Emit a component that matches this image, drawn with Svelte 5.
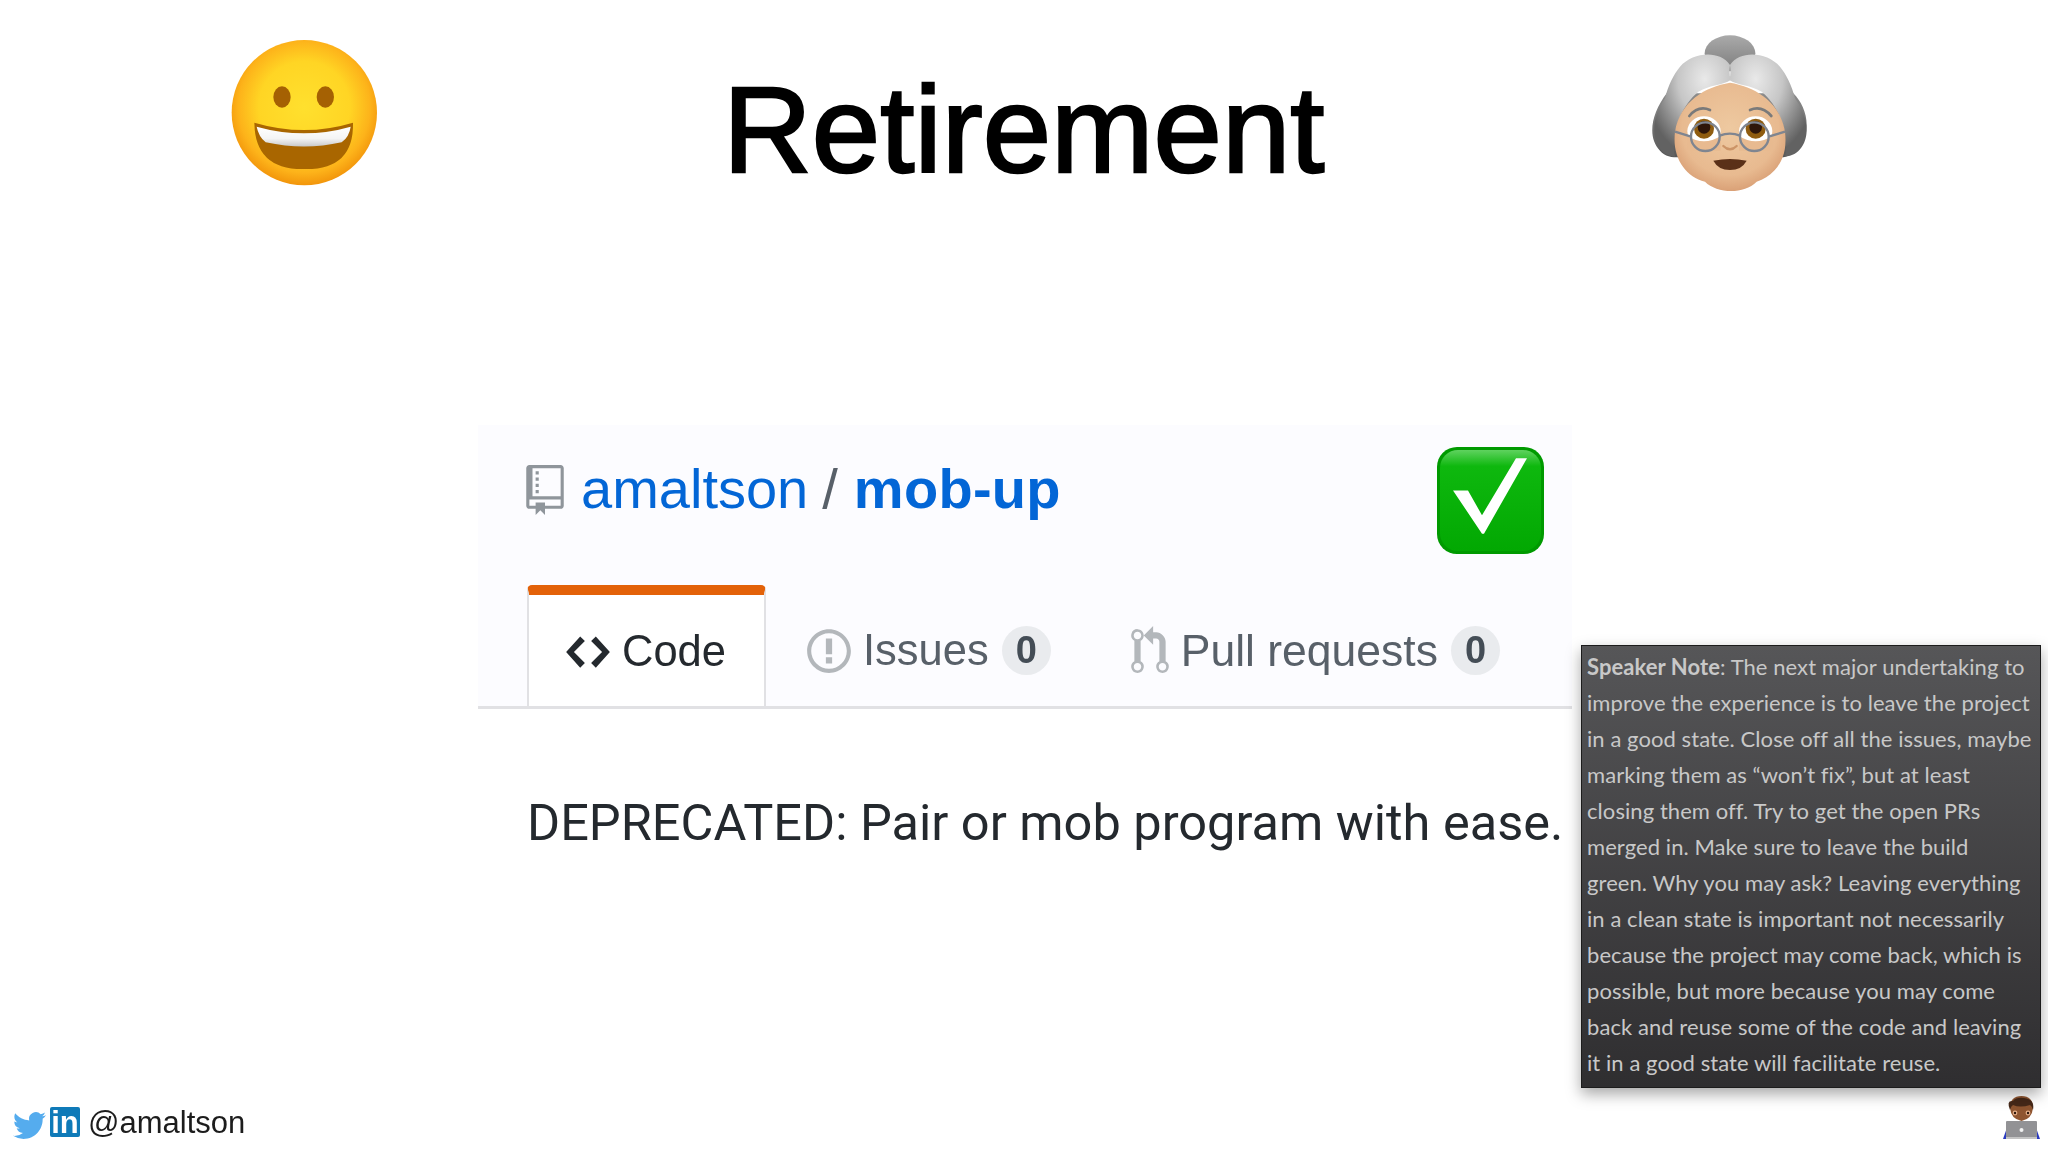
<script>
  const noteLines = [
    "improve the experience is to leave the project",
    "in a good state. Close off all the issues, maybe",
    "marking them as “won’t fix”, but at least",
    "closing them off. Try to get the open PRs",
    "merged in. Make sure to leave the build",
    "green. Why you may ask? Leaving everything",
    "in a clean state is important not necessarily",
    "because the project may come back, which is",
    "possible, but more because you may come",
    "back and reuse some of the code and leaving",
    "it in a good state will facilitate reuse.",
  ];
</script>

<div class="slide">
  <div class="content">
    <header class="top">
      <svg class="emoji" viewBox="0 0 600 540" aria-hidden="true">
        <defs>
          <radialGradient id="smileFace" cx="0.5" cy="0.46" r="0.54">
            <stop offset="0" stop-color="#ffe02e" />
            <stop offset="0.58" stop-color="#ffd524" />
            <stop offset="0.84" stop-color="#fdb31a" />
            <stop offset="1" stop-color="#f2950b" />
          </radialGradient>
          <linearGradient id="teeth" x1="0" y1="0" x2="0" y2="1">
            <stop offset="0" stop-color="#fff" />
            <stop offset="0.6" stop-color="#f4f4f4" />
            <stop offset="1" stop-color="#c9c9c9" />
          </linearGradient>
        </defs>
        <circle cx="313" cy="278" r="218" fill="url(#smileFace)" />
        <ellipse cx="246" cy="231" rx="26" ry="32" fill="#a56103" />
        <ellipse cx="376" cy="231" rx="26" ry="32" fill="#a56103" />
        <path d="M163 308 Q313 352 459 308 Q462 450 313 447 Q165 450 163 308Z" fill="#a96600" />
        <path d="M170 320 Q313 360 452 320 Q448 350 425 367 Q313 392 197 367 Q176 350 170 320Z" fill="url(#teeth)" />
      </svg>

      <h1>Retirement</h1>

      <svg class="emoji" viewBox="0 0 600 540" aria-hidden="true">
        <defs>
          <linearGradient id="bun" x1="0" y1="0" x2="0" y2="1">
            <stop offset="0" stop-color="#aaa" />
            <stop offset="1" stop-color="#7c7c7c" />
          </linearGradient>
          <linearGradient id="hairBack" x1="0" y1="0" x2="0" y2="1">
            <stop offset="0" stop-color="#8c8c8c" />
            <stop offset="1" stop-color="#585858" />
          </linearGradient>
          <radialGradient id="lobeL" cx="0.66" cy="0.24" r="0.78">
            <stop offset="0" stop-color="#e9e9e9" />
            <stop offset="0.45" stop-color="#c6c6c6" />
            <stop offset="1" stop-color="#626262" />
          </radialGradient>
          <radialGradient id="lobeR" cx="0.34" cy="0.24" r="0.78">
            <stop offset="0" stop-color="#e9e9e9" />
            <stop offset="0.45" stop-color="#c6c6c6" />
            <stop offset="1" stop-color="#626262" />
          </radialGradient>
          <radialGradient id="skin" cx="0.5" cy="0.42" r="0.62">
            <stop offset="0" stop-color="#eec9a0" />
            <stop offset="0.7" stop-color="#e8ba90" />
            <stop offset="1" stop-color="#d69a70" />
          </radialGradient>
        </defs>
        <ellipse cx="300" cy="100" rx="76" ry="54" fill="url(#bun)" />
        <path d="M110 220 C65 280 50 350 90 392 C105 410 125 412 150 412 L450 412 C480 412 505 395 525 350 C540 300 520 250 490 220Z" fill="url(#hairBack)" />
        <path d="M300 135 C270 90 190 95 150 140 C130 165 115 195 105 235 C70 285 60 345 92 388 C105 405 120 408 135 410 C120 350 150 260 205 215 C240 195 280 195 302 180 C298 165 298 150 300 135Z" fill="url(#lobeL)" />
        <path d="M300 135 C330 90 410 95 450 140 C470 165 485 195 495 235 C530 285 545 345 510 388 C495 405 480 408 465 410 C480 350 450 260 395 215 C360 195 320 195 298 180 C302 165 302 150 300 135Z" fill="url(#lobeR)" />
        <path d="M300 188 C225 200 150 245 135 335 C125 410 165 470 225 485 C260 520 340 525 380 485 C440 465 475 410 465 335 C450 245 375 200 300 188Z" fill="url(#skin)" />
        <path d="M178 288 Q205 255 240 270" stroke="#7a7a7a" stroke-width="8" fill="none" stroke-linecap="round" />
        <path d="M360 270 Q395 255 424 288" stroke="#7a7a7a" stroke-width="8" fill="none" stroke-linecap="round" />
        <ellipse cx="222" cy="333" rx="50" ry="44" fill="#fff" />
        <ellipse cx="377" cy="333" rx="50" ry="44" fill="#fff" />
        <circle cx="222" cy="326" r="30" fill="#8f5c10" />
        <circle cx="377" cy="326" r="30" fill="#8f5c10" />
        <circle cx="222" cy="322" r="19" fill="#2e160a" />
        <circle cx="377" cy="322" r="19" fill="#2e160a" />
        <path d="M172 348 Q222 380 272 348 L272 392 L172 392Z" fill="#e8ba90" />
        <path d="M327 348 Q377 380 427 348 L427 392 L327 392Z" fill="#e8ba90" />
        <circle cx="226" cy="350" r="43" fill="none" stroke="#7f8590" stroke-width="7" />
        <circle cx="373" cy="350" r="43" fill="none" stroke="#7f8590" stroke-width="7" />
        <path d="M183 350 L135 335 M269 347 Q300 335 330 347 M416 350 L465 335" fill="none" stroke="#7f8590" stroke-width="7" />
        <path d="M280 378 Q300 398 320 378" fill="none" stroke="#cc9467" stroke-width="7" stroke-linecap="round" />
        <path d="M250 422 Q300 412 350 422 Q335 450 300 450 Q265 450 250 422Z" fill="#5a3018" />
      </svg>
    </header>

    <section class="card">
      <div class="repo">
        <svg class="repo-icon" viewBox="0 0 12 16" aria-hidden="true">
          <path d="M4 9H3V8h1v1zm0-3H3v1h1V6zm0-2H3v1h1V4zm0-2H3v1h1V2zm8-1v12c0 .55-.45 1-1 1H6v2l-1.5-1.5L3 16v-2H1c-.55 0-1-.45-1-1V1c0-.55.45-1 1-1h10c.55 0 1 .45 1 1zm-1 10H1v2h2v-1h3v1h5v-2zm0-10H2v9h9V1z" />
        </svg>
        <span class="owner">amaltson</span>
        <span class="sep">/</span>
        <span class="name">mob-up</span>
        <svg class="check" viewBox="0 0 107 107" aria-hidden="true">
          <defs>
            <linearGradient id="green" x1="0" y1="0" x2="0" y2="1">
              <stop offset="0" stop-color="#5fd25f" />
              <stop offset="0.16" stop-color="#0eb80e" />
              <stop offset="1" stop-color="#02a802" />
            </linearGradient>
          </defs>
          <rect width="107" height="107" rx="20" fill="#009a00" />
          <rect x="3" y="3" width="101" height="101" rx="18" fill="url(#green)" />
          <path d="M16 57 L31 57 L45 84 L79 22 L90 22 L47 104 L45 104Z" transform="translate(0 -9) scale(1 .92)" fill="#fff" />
        </svg>
      </div>

      <nav class="tabs">
        <div class="tab active">
          <svg class="code-icon" viewBox="0 0 14 16" aria-hidden="true">
            <path d="M9.5 3L8 4.5 11.5 8 8 11.5 9.5 13 14 8 9.5 3zm-5 0L0 8l4.5 5L6 11.5 2.5 8 6 4.5 4.5 3z" />
          </svg>
          <span>Code</span>
        </div>
        <div class="tab issues">
          <svg class="tab-icon issue-icon" viewBox="0 0 14 16" aria-hidden="true">
            <path d="M7 2.3c3.14 0 5.7 2.56 5.7 5.7s-2.56 5.7-5.7 5.7A5.71 5.71 0 011.3 8c0-3.14 2.56-5.7 5.7-5.7zM7 1C3.14 1 0 4.14 0 8s3.14 7 7 7 7-3.14 7-7-3.14-7-7-7zm1 3H6v5h2V4zm0 6H6v2h2v-2z" />
          </svg>
          <span>Issues</span>
          <span class="badge">0</span>
        </div>
        <div class="tab pulls">
          <svg class="tab-icon pr-icon" viewBox="0 0 12 16" aria-hidden="true">
            <path d="M11 11.28V5c-.03-.78-.34-1.47-.94-2.06C9.46 2.35 8.78 2.03 8 2H7V0L4 3l3 3V4h1c.27.02.48.11.69.31.21.2.3.42.31.69v6.28A1.993 1.993 0 0010 15a1.993 1.993 0 001-3.72zm-1 2.92c-.66 0-1.2-.55-1.2-1.2 0-.65.55-1.2 1.2-1.2.65 0 1.2.55 1.2 1.2 0 .65-.55 1.2-1.2 1.2zM4 3c0-1.11-.89-2-2-2a1.993 1.993 0 00-1 3.72v6.56A1.993 1.993 0 002 15a1.993 1.993 0 001-3.72V4.72c.59-.34 1-.98 1-1.72zm-.8 10c0 .66-.55 1.2-1.2 1.2-.65 0-1.2-.55-1.2-1.2 0-.65.55-1.2 1.2-1.2.65 0 1.2.55 1.2 1.2zM2 4.2C1.34 4.2.8 3.65.8 3c0-.65.55-1.2 1.2-1.2.65 0 1.2.55 1.2 1.2 0 .65-.55 1.2-1.2 1.2z" />
          </svg>
          <span class="pull-label">Pull requests</span>
          <span class="badge">0</span>
        </div>
      </nav>
    </section>

    <p class="desc">DEPRECATED: Pair or mob program with ease.</p>

    <footer class="bottom">
      <svg class="twitter" viewBox="0 0 24 24" aria-hidden="true">
        <path d="M23.953 4.57a10 10 0 01-2.825.775 4.958 4.958 0 002.163-2.723c-.951.555-2.005.959-3.127 1.184a4.92 4.92 0 00-8.384 4.482C7.69 8.095 4.067 6.13 1.64 3.162a4.822 4.822 0 00-.666 2.475c0 1.71.87 3.213 2.188 4.096a4.904 4.904 0 01-2.228-.616v.06a4.923 4.923 0 003.946 4.827 4.996 4.996 0 01-2.212.085 4.936 4.936 0 004.604 3.417 9.867 9.867 0 01-6.102 2.105c-.39 0-.779-.023-1.17-.067a13.995 13.995 0 007.557 2.209c9.053 0 13.998-7.496 13.998-13.985 0-.21 0-.42-.015-.63A9.935 9.935 0 0024 4.59z" />
      </svg>
      <span class="linkedin">in</span>
      <span class="handle">@amaltson</span>
      <svg class="dev" viewBox="0 0 168 102" aria-hidden="true">
        <path d="M123 89 L129 72 H154 L160 89Z" fill="#2a3ac0" />
        <path d="M130 58 Q130 46 141.500 46 Q153 46 153 58 Q152 69 141.500 71 Q131 69 130 58Z" fill="#8f5530" />
        <path d="M130 60 Q126 50 133 51 Q136 47 144 48 Q155 49 153 60 Q152 56 150 55 Q140 58 133 55 Q131 56 130 60Z" fill="#452818" />
        <circle cx="135" cy="63" r="2.400" fill="#e6b08a" /><circle cx="148" cy="63" r="2.400" fill="#e6b08a" />
        <circle cx="135" cy="63" r="1.200" fill="#2c160c" /><circle cx="148" cy="63" r="1.200" fill="#2c160c" />
        <rect x="126" y="71" width="31" height="17" rx="1" fill="#929295" />
        <rect x="126" y="87" width="31" height="2" fill="#c4c4c4" />
        <circle cx="141.500" cy="80" r="2" fill="#f2f2f2" />
      </svg>
    </footer>
  </div>

  <aside class="note">
    <p><b>Speaker Note</b>: The next major undertaking to</p>
    {#each noteLines as line}
      <p>{line}</p>
    {/each}
  </aside>
</div>

<style>
  :global(body) {
    margin: 0;
    background: #fff;
  }

  .slide {
    position: relative;
    width: 2048px;
    height: 1152px;
    overflow: hidden;
    background: #fff;
    font-family: "Liberation Sans", Arial, sans-serif;
  }

  .content {
    height: 100%;
    display: flex;
    flex-direction: column;
    filter: blur(0.45px);
  }

  .top {
    height: 405px;
    padding: 20px 218px 0 200px;
    display: grid;
    grid-template-columns: 523px 907px 200px;
    align-items: start;
  }

  .emoji {
    width: 200px;
    height: 180px;
    filter: blur(0.6px);
  }

  h1 {
    margin: 50px 0 0;
    font-size: 123px;
    line-height: 120px;
    font-weight: 400;
    color: #000;
    -webkit-text-stroke: 2.4px #000;
  }

  .card {
    margin-left: 478px;
    width: 1094px;
    height: 281px;
    background: #fcfcff;
    border-bottom: 3px solid #e1e1e4;
    display: flex;
    flex-direction: column;
  }

  .repo {
    height: 160px;
    padding: 22px 28px 0 48px;
    box-sizing: border-box;
    display: flex;
    align-items: flex-start;
    font-size: 56px;
    line-height: 84px;
    color: #0366d6;
  }

  .repo-icon {
    width: 38px;
    height: 50px;
    margin-top: 18px;
    fill: #8f959b;
  }

  .owner {
    margin-left: 17px;
  }

  .sep {
    margin: 0 16px 0 14px;
    color: #586069;
  }

  .name {
    font-weight: 700;
    letter-spacing: 0.3px;
  }

  .check {
    margin-left: auto;
    width: 107px;
    height: 107px;
  }

  .tabs {
    height: 121px;
    margin-bottom: -3px;
    padding-left: 49px;
    display: flex;
    font-size: 43.5px;
    color: #586069;
  }

  .tab {
    display: flex;
    align-items: center;
    box-sizing: border-box;
    padding-top: 10px;
  }

  .tab.active {
    width: 239px;
    padding: 2px 0 0 37px;
    background: #fff;
    color: #24292e;
    border-left: 2px solid #e1e1e4;
    border-right: 2px solid #e1e1e4;
    border-top: 10px solid #e36209;
    border-radius: 5px 5px 0 0;
    gap: 12px;
  }

  .code-icon {
    width: 44px;
    height: 50px;
    fill: #24292e;
  }

  .tab-icon {
    fill: #b3b7bb;
    height: 50px;
  }

  .issues {
    padding-left: 41px;
    gap: 12px;
  }

  .issue-icon {
    width: 44px;
  }

  .pulls {
    margin-left: 80px;
    gap: 12px;
  }

  .pr-icon {
    width: 38px;
  }

  .pull-label {
    font-size: 44.5px;
  }

  .badge {
    width: 49px;
    height: 49px;
    border-radius: 50%;
    background: #e9ebee;
    display: flex;
    align-items: center;
    justify-content: center;
    font-size: 38px;
    font-weight: 700;
    color: #444d56;
    margin-left: 1px;
  }

  .desc {
    margin: 84px 0 0 527px;
    font-family: Roboto, "Liberation Sans", sans-serif;
    font-size: 50.5px;
    line-height: 60px;
    color: #24292e;
    white-space: nowrap;
  }

  .bottom {
    margin-top: auto;
    height: 55px;
    padding-left: 13px;
    display: flex;
    align-items: flex-start;
    position: relative;
  }

  .twitter {
    width: 33px;
    height: 33px;
    margin-top: 12px;
    fill: #55acee;
  }

  .linkedin {
    margin: 10px 0 0 4px;
    width: 30px;
    height: 30px;
    background: #0f7ab8;
    border-radius: 2px;
    color: #fff;
    font-weight: 700;
    font-size: 31px;
    line-height: 31px;
    text-align: center;
  }

  .handle {
    margin: 8px 0 0 8px;
    font-size: 31px;
    line-height: 36px;
    color: #1c1c1c;
  }

  .dev {
    margin-left: auto;
    width: 168px;
    height: 102px;
    flex-shrink: 0;
    align-self: flex-end;
  }

  .note {
    position: absolute;
    left: 1581px;
    top: 645px;
    width: 460px;
    height: 443px;
    box-sizing: border-box;
    padding: 3px 0 0 5px;
    border: 1px solid #1c1c1c;
    background: linear-gradient(#565658, #2f2e30);
    box-shadow: 0 6px 14px rgba(0, 0, 0, 0.35);
    font-family: Lato, "Open Sans", sans-serif;
    font-size: 22px;
    letter-spacing: 0.07px;
    line-height: 36px;
    color: #c8c8c8;
    white-space: nowrap;
  }

  .note p {
    margin: 0;
  }
</style>
